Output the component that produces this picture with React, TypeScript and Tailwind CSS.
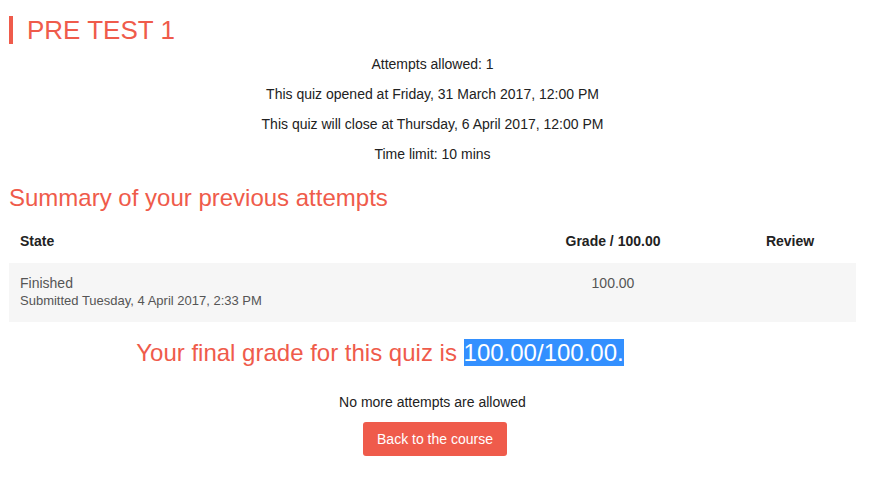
import React from "react";

const red = "text-[#ef5b4b]";

const infoLines = [
    "Attempts allowed: 1",
    "This quiz opened at Friday, 31 March 2017, 12:00 PM",
    "This quiz will close at Thursday, 6 April 2017, 12:00 PM",
    "Time limit: 10 mins",
];

const App = () => {
    return (
        <div className="min-h-screen bg-white font-['Liberation_Sans',Arial,sans-serif] text-[#222]">
            <div className="w-[847px] ml-[9px] pt-4">
                <h2 className={`border-l-4 border-[#ef5b4b] pl-[14px] text-[26px] leading-[28px] ${red}`}>
                    PRE TEST 1
                </h2>

                <div className="mt-[10px] text-center text-[14px] leading-5">
                    {infoLines.map((line) => (
                        <p key={line} className="mb-[10px]">{line}</p>
                    ))}
                </div>

                <h3 className={`mt-[19px] text-[24px] leading-[29px] ${red}`}>
                    Summary of your previous attempts
                </h3>

                <table className="mt-[7px] w-full border-collapse text-[14px]">
                    <thead>
                        <tr className="h-[44px]">
                            <th className="w-[493px] px-[11px] text-left font-bold">State</th>
                            <th className="w-[222px] text-center font-bold">Grade / 100.00</th>
                            <th className="text-center font-bold">Review</th>
                        </tr>
                    </thead>
                    <tbody>
                        <tr className="bg-[#f6f6f6] align-top text-[#555]">
                            <td className="px-[11px] pt-[10px] pb-[13px]">
                                <div className="leading-5">Finished</div>
                                <div className="text-[13px] leading-4">Submitted Tuesday, 4 April 2017, 2:33 PM</div>
                            </td>
                            <td className="pt-[10px] text-center leading-5">100.00</td>
                            <td></td>
                        </tr>
                    </tbody>
                </table>

                <h3 className={`mt-[17px] pr-[105px] text-center text-[24px] leading-[28px] ${red}`}>
                    Your final grade for this quiz is{" "}
                    <span className="bg-[#3390ff] text-white">100.00/100.00.</span>
                </h3>

                <p className="mt-[25px] text-center text-[14px] leading-5">No more attempts are allowed</p>

                <div className="mt-[10px] flex justify-center">
                    <button className="ml-[5px] rounded-[3px] bg-[#ef5b4b] px-[14px] py-[7px] text-[14px] leading-5 text-white">
                        Back to the course
                    </button>
                </div>
            </div>
        </div>
    );
};

export default App;
